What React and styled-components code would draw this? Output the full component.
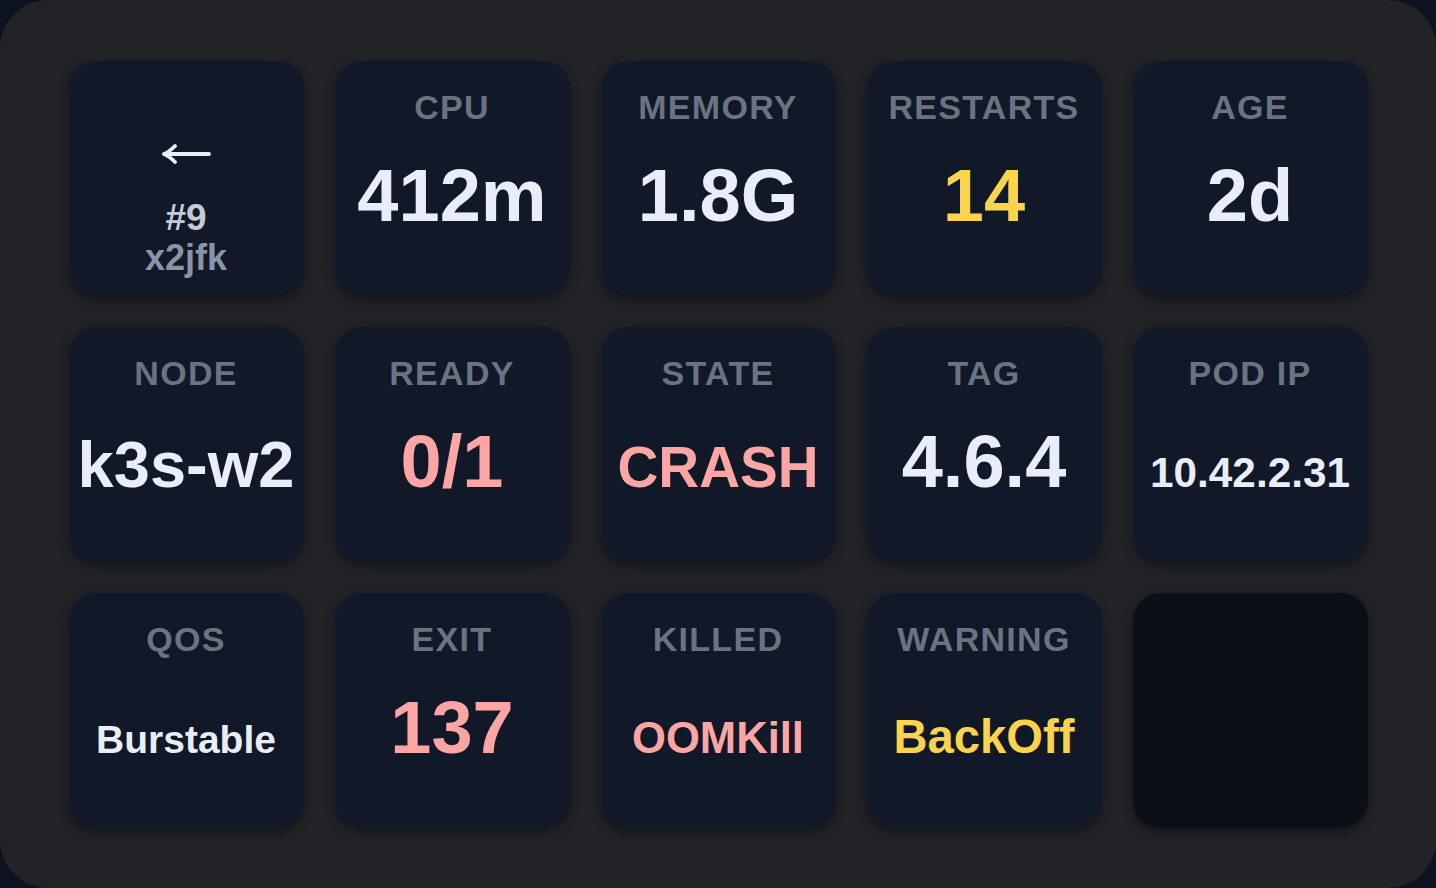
import React from "react";
import styled, { createGlobalStyle } from "styled-components";

const Global = createGlobalStyle`
  html, body { margin: 0; padding: 0; background: #0d1220; }
  body { font-family: "Liberation Sans", Arial, sans-serif; }
`;

const Panel = styled.div`
  width: 1436px;
  height: 888px;
  box-sizing: border-box;
  border-radius: 48px;
  background: #222327;
  padding: 60px 68px;
  display: grid;
  grid-template-columns: repeat(5, 236px);
  grid-auto-rows: 236px;
  gap: 30px;
`;

const Key = styled.div`
  border-radius: 28px;
  background: ${(p) => (p.$empty ? "#0b0f18" : "#111827")};
  box-shadow: 0 4px 10px rgba(0, 0, 0, 0.4),
    inset 1px 1px 0 rgba(255, 255, 255, ${(p) => (p.$empty ? 0.07 : 0.04)});
  display: flex;
  flex-direction: column;
  align-items: center;
  padding-top: ${(p) => p.$top ?? 27}px;
  box-sizing: border-box;
  font-weight: 700;
  text-align: center;
  overflow: hidden;
`;

const Label = styled.div`
  font-size: 34px;
  line-height: 40px;
  letter-spacing: 1.3px;
  color: #6b7280;
  white-space: nowrap;
`;

const Value = styled.div`
  margin-top: 32px;
  font-size: 74px;
  line-height: 74px;
  white-space: nowrap;
`;

const ValueText = styled.span`
  font-size: ${(p) => p.$size}px;
  line-height: 1;
  color: ${(p) => p.$color};
`;

const BackLines = styled.div`
  margin-top: 34px;
  line-height: 40px;
  display: flex;
  flex-direction: column;
`;

const BackLine = styled.span`
  font-size: ${(p) => p.$size}px;
  color: ${(p) => p.$color};
`;

const WHITE = "#e9edf8";
const YELLOW = "#fcd34d";
const PINK = "#fca5a5";

const stats = [
  { label: "CPU", value: "412m", size: 74, color: WHITE },
  { label: "MEMORY", value: "1.8G", size: 74, color: WHITE },
  { label: "RESTARTS", value: "14", size: 74, color: YELLOW },
  { label: "AGE", value: "2d", size: 74, color: WHITE },
  { label: "NODE", value: "k3s-w2", size: 65, color: WHITE },
  { label: "READY", value: "0/1", size: 74, color: PINK },
  { label: "STATE", value: "CRASH", size: 56.5, color: PINK },
  { label: "TAG", value: "4.6.4", size: 74, color: WHITE },
  { label: "POD IP", value: "10.42.2.31", size: 42.3, color: WHITE },
  { label: "QOS", value: "Burstable", size: 39, color: WHITE },
  { label: "EXIT", value: "137", size: 74, color: PINK },
  { label: "KILLED", value: "OOMKill", size: 43.6, color: PINK },
  { label: "WARNING", value: "BackOff", size: 47.2, color: YELLOW },
];

const ArrowIcon = () => (
  <svg width="50" height="20" viewBox="0 0 50 20" aria-hidden="true">
    <path
      d="M3 10 H48 M14 2 Q8 8 3 10 Q8 12 14 18"
      fill="none"
      stroke="#e9edf8"
      strokeWidth="3.8"
      strokeLinecap="round"
      strokeLinejoin="round"
    />
  </svg>
);

export default function App() {
  return (
    <>
      <Global />
      <Panel>
        <Key $top={84}>
          <ArrowIcon />
          <BackLines>
            <BackLine $size={37} $color="#c5cad6">#9</BackLine>
            <BackLine $size={36} $color="#8b93a6">x2jfk</BackLine>
          </BackLines>
        </Key>
        {stats.map((s) => (
          <Key key={s.label}>
            <Label>{s.label}</Label>
            <Value>
              <ValueText $size={s.size} $color={s.color}>
                {s.value}
              </ValueText>
            </Value>
          </Key>
        ))}
        <Key $empty />
      </Panel>
    </>
  );
}
